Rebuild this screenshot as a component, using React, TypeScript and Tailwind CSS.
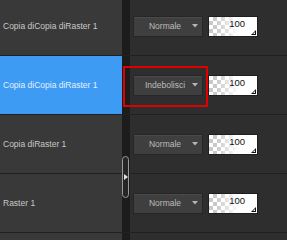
import React from "react";

const layers = [
  { name: "Copia diCopia diRaster 1", blend: "Normale", selected: false },
  { name: "Copia diCopia diRaster 1", blend: "Indebolisci", selected: true },
  { name: "Copia diRaster 1", blend: "Normale", selected: false },
  { name: "Raster 1", blend: "Normale", selected: false },
  { name: "", blend: "", selected: false },
];

function BlendSelect({ label }: { label: string }) {
  return (
    <div className="flex h-[21px] w-[70px] items-center justify-between rounded-[1px] border border-[#262626] bg-[#3f3f3f] pl-[8px] pr-[4px] shadow-[inset_0_1px_0_#4a4a4a]">
      <span className="flex-1 text-center text-[8.5px] text-[#bdbdbd]">{label}</span>
      <svg width="6" height="4" viewBox="0 0 6 4" className="ml-1">
        <path d="M0 0 L6 0 L3 3.5 Z" fill="#b5b5b5" />
      </svg>
    </div>
  );
}

function OpacityBox() {
  return (
    <div className="relative h-[21px] w-[50px] overflow-hidden border border-[#1e1e1e] bg-white">
      <div className="absolute inset-0 bg-[repeating-conic-gradient(#c9c9c9_0_25%,#ffffff_0_50%)] bg-[length:8px_8px]" />
      <div className="absolute inset-0 bg-[linear-gradient(to_right,rgba(255,255,255,0)_15%,#ffffff_62%)]" />
      <span className="absolute right-[12px] top-[1px] text-[9.5px] leading-[12px] text-[#111]">100</span>
      <svg width="5" height="5" viewBox="0 0 5 5" className="absolute bottom-[1px] right-[1px]">
        <path d="M5 0 L5 5 L0 5 Z" fill="#111" />
        <path d="M4 2 L4 4 L2 4 Z" fill="#fff" />
      </svg>
    </div>
  );
}

export default function App() {
  return (
    <div
      className="relative h-[240px] w-[287px] overflow-hidden bg-[#2e2e2e]"
      style={{ fontFamily: '"Liberation Sans", Arial, sans-serif' }}
    >
      <div className="-mt-[3px] flex flex-col">
        {layers.map((l, i) => (
          <div key={i} className="relative flex h-[59px] shrink-0 border-b border-[#212121]">
            <div
              className={`flex w-[122px] items-center pl-[3px] text-[8.5px] ${
                l.selected ? "bg-[#3d9bf4] text-[#e4efff]" : "bg-[#393939] text-[#c8c8c8]"
              }`}
            >
              {l.name}
            </div>
            <div className="w-[8px] bg-[#1c1c1c]" />
            <div className="flex flex-1 items-center gap-[5px] bg-[#2e2e2e] pl-[3px]">
              {l.blend && <BlendSelect label={l.blend} />}
              {l.blend && <OpacityBox />}
            </div>
            {l.selected && (
              <div className="pointer-events-none absolute left-[123px] top-[10px] h-[41px] w-[85px] border-[2px] border-[#e00000]" />
            )}
          </div>
        ))}
      </div>
      <div className="absolute left-[122px] top-[156px] flex h-[42px] w-[7px] items-center justify-center rounded-full border border-[#9a9a9a] bg-[#262626]">
        <svg width="4" height="6" viewBox="0 0 4 6">
          <path d="M0 0 L4 3 L0 6 Z" fill="#e0e0e0" />
        </svg>
      </div>
    </div>
  );
}
